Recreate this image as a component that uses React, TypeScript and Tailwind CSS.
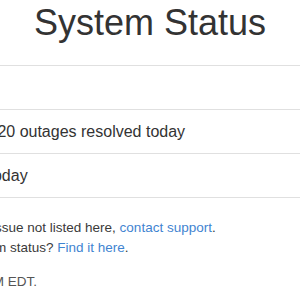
const rows = [
  'No issues',
  'Database: 20 outages resolved today',
  'Incidents today',
];

const App = () => {
  return (
    <main className="min-h-screen bg-white overflow-hidden font-['Liberation_Sans',Arial,sans-serif] text-[#333]">
      <div className="flex justify-center">
        <div className="w-[460px] shrink-0">
          {/* title */}
          <h1 className="pt-[5px] text-center text-[36px] leading-none text-[#333]">System Status</h1>

          {/* status rows */}
          <ul className="mt-[24px] border-t border-[#e0e0e0]">
            {rows.map((r) => (
              <li key={r} className="h-[44px] flex items-center border-b border-[#e0e0e0] text-[16px] whitespace-nowrap">
                {r}
              </li>
            ))}
          </ul>

          {/* footer */}
          <div className="pl-[18px] pt-[20px] text-[13.5px] leading-[20px] text-[#3a3a3a] whitespace-nowrap">
            <p>
              Have an issue not listed here, <a href="#" className="text-[#3f84d1]">contact support</a>.
            </p>
            <p>
              API system status? <a href="#" className="text-[#3f84d1]">Find it here</a>.
            </p>
            <p className="mt-[14px] text-[#555]">As of 4 PM EDT.</p>
          </div>
        </div>
      </div>
    </main>
  );
};

export default App;
